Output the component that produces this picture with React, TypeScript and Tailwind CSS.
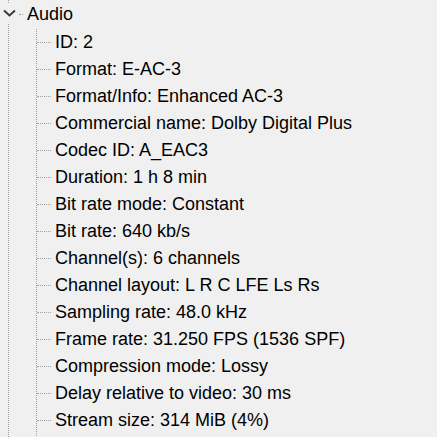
const rows = [
  'ID: 2',
  'Format: E-AC-3',
  'Format/Info: Enhanced AC-3',
  'Commercial name: Dolby Digital Plus',
  'Codec ID: A_EAC3',
  'Duration: 1 h 8 min',
  'Bit rate mode: Constant',
  'Bit rate: 640 kb/s',
  'Channel(s): 6 channels',
  'Channel layout: L R C LFE Ls Rs',
  'Sampling rate: 48.0 kHz',
  'Frame rate: 31.250 FPS (1536 SPF)',
  'Compression mode: Lossy',
  'Delay relative to video: 30 ms',
  'Stream size: 314 MiB (4%)',
];

export default function App() {
  return (
    <div className="relative h-[437px] w-[437px] overflow-hidden bg-[#f0f0f0] font-['Liberation_Sans',Arial,sans-serif] text-[18px] text-black">
      {/* parent tree line */}
      <div className="ml-[8px] h-full border-l border-dotted border-[#a0a0a0]">
        {/* Audio node */}
        <div className="relative flex h-[29px] items-start pt-[5px]">
          <div className="absolute left-[-8px] top-[3px] flex h-[20px] w-[17px] items-center justify-center bg-[#f0f0f0]">
            <svg width="13" height="8" viewBox="0 0 13 8">
              <path d="M1 1.5 L6.5 6.5 L12 1.5" fill="none" stroke="#3a3a3a" strokeWidth="2" />
            </svg>
          </div>
          <span className="ml-[10px] mt-[9px] w-[4px] border-t border-dotted border-[#a0a0a0]" />
          <span className="ml-[4px] leading-none">Audio</span>
        </div>
        {/* children */}
        <div className="ml-[27px] h-full border-l border-dotted border-[#a0a0a0]">
          {rows.map((r) => (
            <div key={r} className="relative flex h-[27px] items-center">
              <span className="w-[14px] border-t border-dotted border-[#a0a0a0]" />
              <span className="ml-[4px] -translate-y-[1px] whitespace-nowrap leading-none">{r}</span>
            </div>
          ))}
        </div>
      </div>
    </div>
  );
}
